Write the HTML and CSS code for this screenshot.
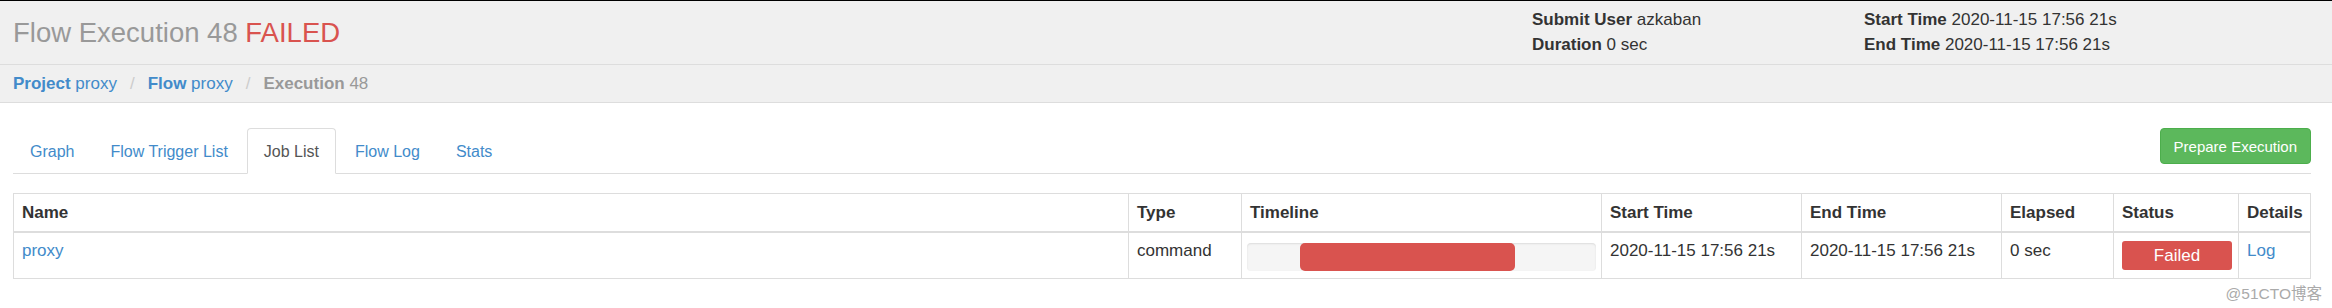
FILE: index.html
```html
<!DOCTYPE html>
<html lang="en">
<head>
  <meta charset="UTF-8">
  <title>Flow Execution 48</title>
  <link rel="stylesheet" href="styles.css">
</head>
<body>

<div class="page-header">
  <h1 class="title">Flow Execution 48 <span class="failed">FAILED</span></h1>
  <div class="info">
    <div><b>Submit User</b> azkaban</div>
    <div><b>Duration</b> 0 sec</div>
  </div>
  <div class="info">
    <div><b>Start Time</b> 2020-11-15 17:56 21s</div>
    <div><b>End Time</b> 2020-11-15 17:56 21s</div>
  </div>
</div>

<div class="breadcrumb">
  <a href="#"><b>Project</b> proxy</a>
  <span class="sep">/</span>
  <a href="#"><b>Flow</b> proxy</a>
  <span class="sep">/</span>
  <span class="current"><b>Execution</b> 48</span>
</div>

<div class="content">
  <div class="tab-bar">
    <ul class="tabs">
      <li><a href="#">Graph</a></li>
      <li><a href="#">Flow Trigger List</a></li>
      <li class="active"><a href="#">Job List</a></li>
      <li><a href="#">Flow Log</a></li>
      <li><a href="#">Stats</a></li>
    </ul>
    <button class="btn-success">Prepare Execution</button>
  </div>

  <table class="jobs">
    <colgroup>
      <col class="c-name">
      <col class="c-type">
      <col class="c-timeline">
      <col class="c-time">
      <col class="c-time">
      <col class="c-elapsed">
      <col class="c-status">
      <col>
    </colgroup>
    <thead>
      <tr>
        <th>Name</th>
        <th>Type</th>
        <th>Timeline</th>
        <th>Start Time</th>
        <th>End Time</th>
        <th>Elapsed</th>
        <th>Status</th>
        <th>Details</th>
      </tr>
    </thead>
    <tbody>
      <tr>
        <td><a href="#">proxy</a></td>
        <td>command</td>
        <td class="timeline-cell">
          <div class="progress"><div class="progress-bar" style="margin-left:15.1%;width:61.7%"></div></div>
        </td>
        <td>2020-11-15 17:56 21s</td>
        <td>2020-11-15 17:56 21s</td>
        <td>0 sec</td>
        <td class="status-cell"><span class="label-failed">Failed</span></td>
        <td><a href="#">Log</a></td>
      </tr>
    </tbody>
  </table>
</div>

<div class="watermark">@51CTO博客</div>

</body>
</html>
```

FILE: styles.css
```css
* { box-sizing: border-box; }
body { margin:0; font-family:"Liberation Sans", Arial, sans-serif; font-size:17px; color:#333; background:#fff; border-top:1px solid #000; }
a { color:#428bca; text-decoration:none; }

.page-header { display:grid; grid-template-columns:1519px 332px 1fr; align-items:center; padding:6px 21px 7px 13px; background:#f0f0f0; border-bottom:1px solid #ddd; }
.title { margin:1px 0 0; font-size:27.5px; font-weight:normal; line-height:30px; color:#999; }
.title .failed { color:#d9534f; }
.info div { line-height:25px; }

.breadcrumb { display:flex; padding:7px 13px 6px; line-height:24px; background:#f0f0f0; border-bottom:1px solid #ddd; }
.breadcrumb .sep { margin:0 13px; color:#ccc; }
.breadcrumb .current { color:#999; }

.content { padding:0 21px 0 13px; }

.tab-bar { display:flex; align-items:flex-start; margin-top:25px; border-bottom:1px solid #ddd; }
.tabs { display:flex; margin:0; padding:0; list-style:none; }
.tabs li a { display:block; margin:0 2px -1px 0; padding:12px 16px 10px; font-size:16px; line-height:22px; border:1px solid transparent; border-radius:4px 4px 0 0; }
.tabs li.active a { color:#555; background:#fff; border-color:#ddd #ddd #fff; }
.btn-success { margin-left:auto; height:36px; padding:0 13px; font-family:inherit; font-size:15px; color:#fff; background:#5cb85c; border:1px solid #4cae4c; border-radius:4px; }

.jobs { width:100%; margin-top:19px; border-collapse:collapse; table-layout:fixed; border:1px solid #ddd; }
.jobs th, .jobs td { padding:8px; text-align:left; vertical-align:top; border:1px solid #ddd; }
.jobs th { line-height:21px; border-bottom:2px solid #ddd; }
.jobs td { line-height:20px; }
.c-name { width:1115px; }
.c-type { width:113px; }
.c-timeline { width:360px; }
.c-time { width:200px; }
.c-elapsed { width:112px; }
.c-status { width:125px; }

.jobs td.timeline-cell { padding:8px 5px 6px; }
.progress { display:flex; margin-top:2px; height:28px; background:#f5f5f5; border-radius:4px; box-shadow:inset 0 1px 2px rgba(0,0,0,.1); }
.progress-bar { height:100%; background:#d9534f; border-radius:5px; }

.jobs td.status-cell { padding:8px 6px 8px 8px; }
.label-failed { display:block; height:29px; line-height:29px; text-align:center; color:#fff; background:#d9534f; border-radius:3px; }

.watermark { position:absolute; top:281px; right:10px; font-family:"Liberation Sans", "Noto Sans CJK SC", sans-serif; font-size:15.5px; color:#aaa; }
```
